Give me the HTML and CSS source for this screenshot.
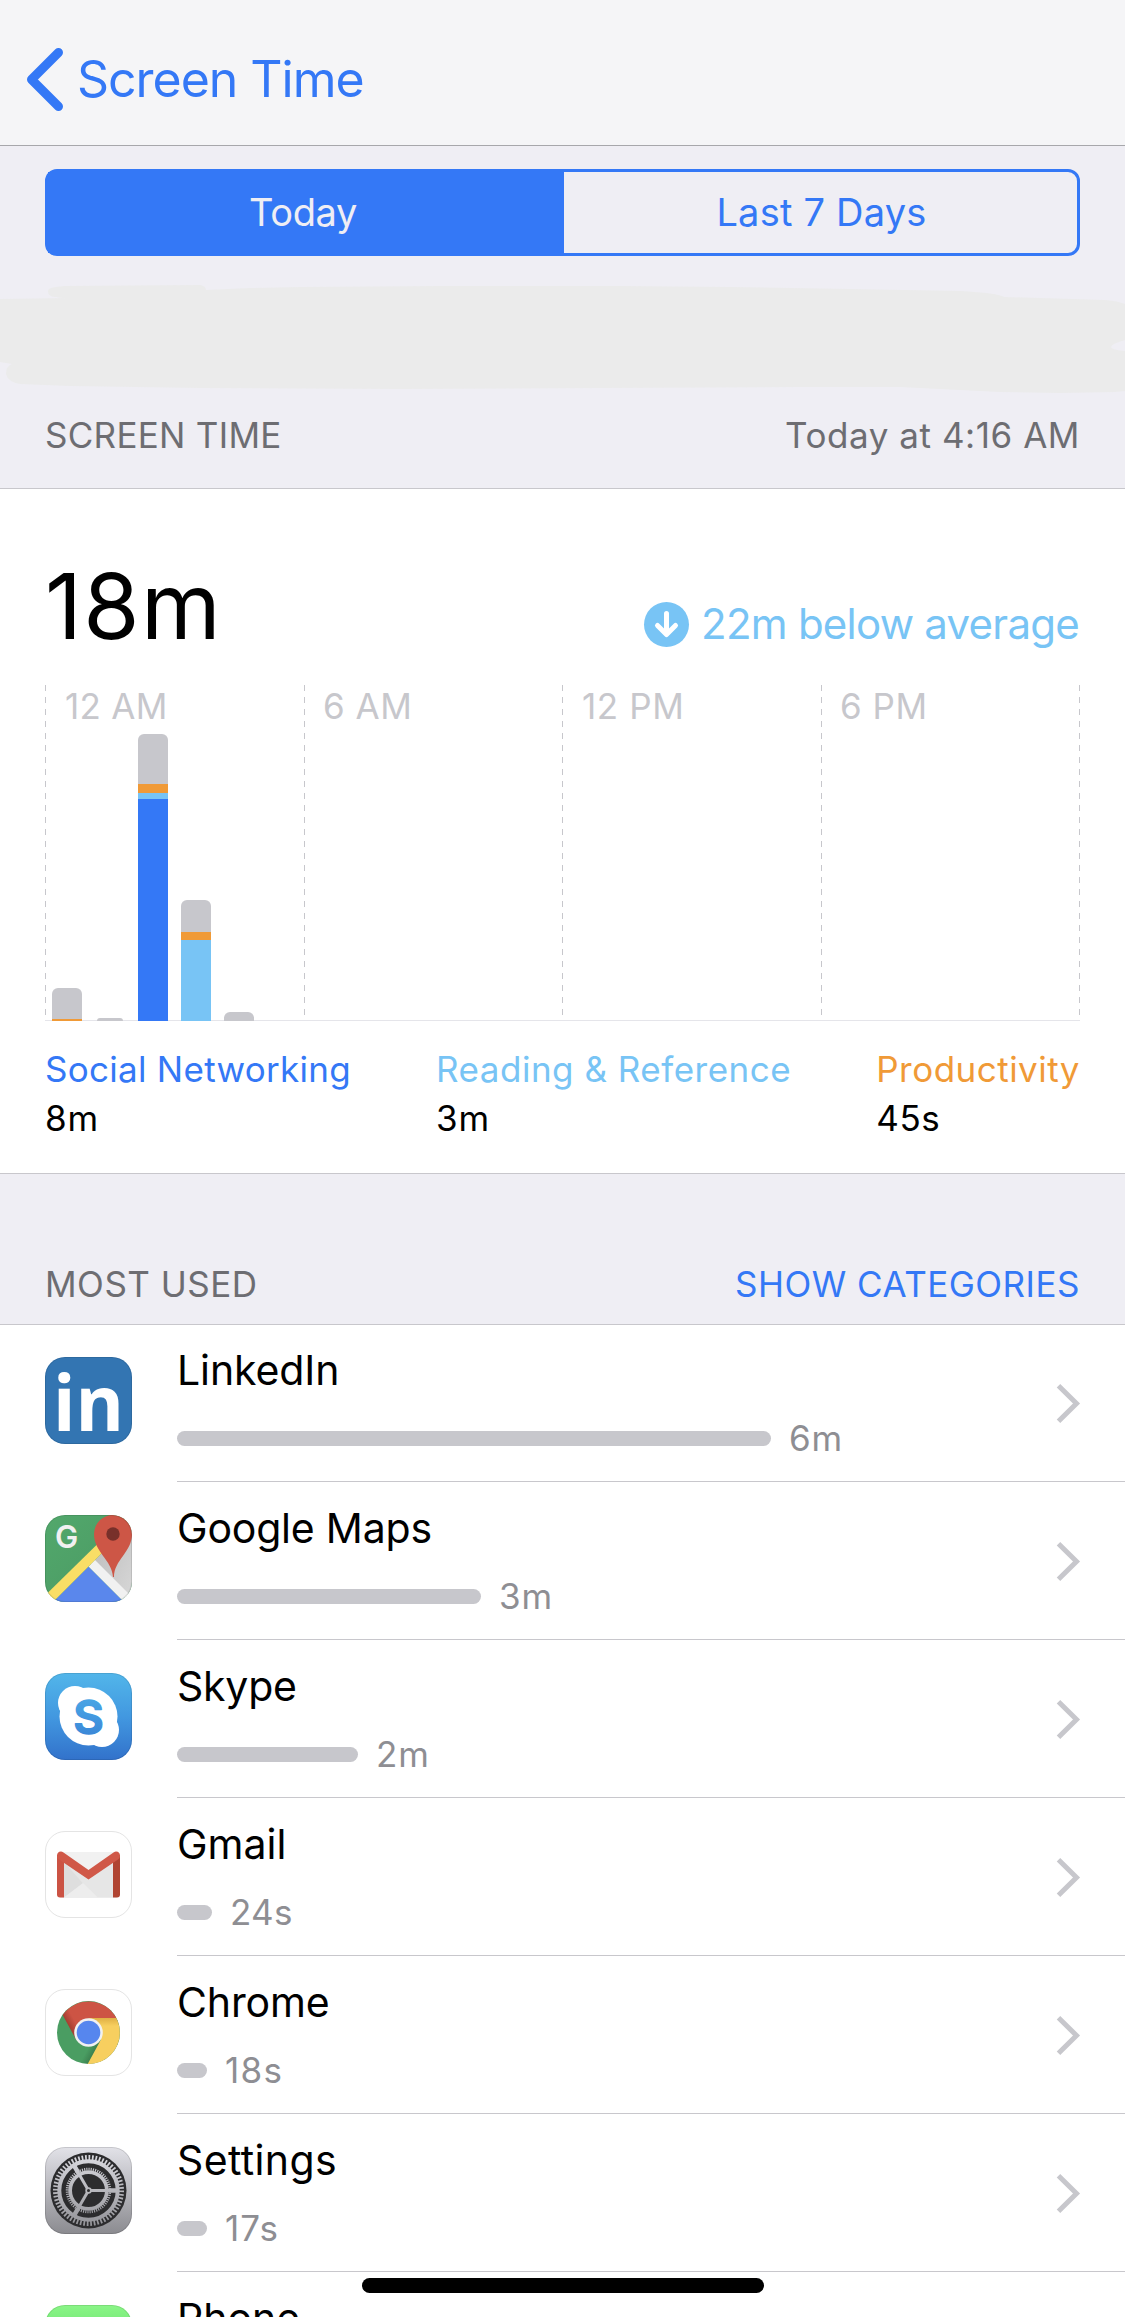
FILE: index.html
```
<!DOCTYPE html>
<html lang="en">
<head>
<meta charset="utf-8">
<title>Screen Time</title>
<link rel="stylesheet" href="styles.css">
</head>
<body>
<div class="screen">
  <header class="nav">
    <svg class="nav-back" width="40" height="66" viewBox="0 0 40 66"><path d="M34.5 6.5 7.5 33.500 34.500 60.500" fill="none" stroke="#3478f6" stroke-width="9" stroke-linecap="round" stroke-linejoin="round"/></svg>
    <span class="nav-title">Screen Time</span>
  </header>

  <section class="top">
    <div class="segments">
      <div class="segment segment-on">Today</div>
      <div class="segment segment-off">Last 7 Days</div>
    </div>
    <svg class="smudge" width="1125" height="158" viewBox="0 256 1125 158"><path fill="#ebebeb" d="M0 299 68 298 C52 298 48 296 48 291 C48 288 54 287 64 286 L200 285 Q206 286 206 290 L250 288 300 287 440 286 620 286 730 287 850 289 960 291 Q998 293 1004 297 L1105 300 Q1118 301 1125 304 V340 Q1111 344 1111 347 Q1112 350 1125 351 V391 L1115 392 1060 393 1000 392 900 387 800 387 600 388 400 389 200 388 70 386 20 384 Q8 382 6 374 Q6 366 12 364 L0 362Z"/></svg>
    <div class="heading">
      <span class="heading-a">SCREEN TIME</span>
      <span class="heading-b">Today at 4:16 AM</span>
    </div>
  </section>

  <section class="card">
    <div class="summary">
      <div class="total">18m</div>
      <div class="average">
        <svg class="average-icon" width="45" height="45" viewBox="0 0 45 45"><circle cx="22.500" cy="22.500" r="22.500" fill="#78c4f5"/><path d="M22.500 11.500V32M13.500 23.500l9 9 9-9" fill="none" stroke="#fff" stroke-width="5" stroke-linecap="round" stroke-linejoin="round"/></svg>
        <span class="average-text">22m below average</span>
      </div>
    </div>

    <div class="chart">
      <div class="hours">
        <div class="hour h12">12 AM</div>
        <div class="hour h6">6 AM</div>
        <div class="hour h12p">12 PM</div>
        <div class="hour h6">6 PM</div>
      </div>
      <div class="bars">
        <div class="bar"><i class="other" style="height:31px"></i><i class="prod" style="height:2px"></i></div>
        <div class="bar bar-tiny"><i class="other" style="height:3px"></i></div>
        <div class="bar"><i class="other" style="height:50px"></i><i class="prod" style="height:9px"></i><i class="read" style="height:6px"></i><i class="social" style="height:222px"></i></div>
        <div class="bar"><i class="other" style="height:32px"></i><i class="prod" style="height:8px"></i><i class="read" style="height:81px"></i></div>
        <div class="bar"><i class="other" style="height:9px"></i></div>
      </div>
    </div>

    <div class="legend">
      <div class="key"><span class="key-social">Social Networking</span><span class="key-min">8m</span></div>
      <div class="key"><span class="key-read">Reading &amp; Reference</span><span class="key-min">3m</span></div>
      <div class="key"><span class="key-prod">Productivity</span><span class="key-sec">45s</span></div>
    </div>
  </section>

  <div class="heading heading-list">
    <span class="heading-c">MOST USED</span>
    <span class="heading-link">SHOW CATEGORIES</span>
  </div>

  <section class="apps">
    <div class="app">
      <svg class="icon" width="87" height="87" viewBox="0 0 87 87"><rect width="87" height="87" rx="20" fill="#3375b2"/><rect x=".5" y=".5" width="86" height="86" rx="19.500" fill="none" stroke="#000" stroke-opacity=".1"/><text x="8" y="74" class="mark-in" textLength="71" lengthAdjust="spacingAndGlyphs">in</text></svg>
      <div class="app-body">
        <div class="app-info"><div class="app-name n-linkedin">LinkedIn</div><div class="usage"><div class="meter" style="width:594px"></div><span class="time t-min">6m</span></div></div>
        <svg class="chevron" width="26" height="39" viewBox="0 0 26 39"><path d="M3.500 1.800 21.500 19.500 3.500 37.200" fill="none" stroke="#c7c7cc" stroke-width="5"/></svg>
      </div>
    </div>

    <div class="app">
      <svg class="icon" width="87" height="87" viewBox="0 0 87 87">
        <defs>
          <clipPath id="tile"><rect width="87" height="87" rx="20"/></clipPath>
          <linearGradient id="land" x1="0" y1="0" x2="1" y2="1"><stop offset="0" stop-color="#52a86c"/><stop offset="1" stop-color="#4a9862"/></linearGradient>
          <linearGradient id="shade" x1="0" y1="0" x2="1" y2="1"><stop offset="0" stop-color="#b9b9b9"/><stop offset="1" stop-color="#d8d8d8"/></linearGradient>
        </defs>
        <g clip-path="url(#tile)">
          <rect width="87" height="87" fill="url(#land)"/>
          <path d="M87 8 46 49 87 87Z" fill="url(#shade)"/>
          <path d="M43.500 51.500 8 87H79Z" fill="#5a87ec"/>
          <path d="M43.500 51.500 50 45 90 85 84 92Z" fill="#f1f1f1"/>
          <path d="M-2 82.500 52 29.500 58 37 5 90Z" fill="#f9de66"/>
          <path d="M68 62C67 45 49 37 49 19A19 19 0 0 1 87 19C87 37 69 45 69 62Z" fill="#cd5646"/>
          <circle cx="68" cy="19" r="6.700" fill="#78302a"/>
        </g>
        <text x="21.500" y="33" class="mark-g" text-anchor="middle">G</text>
        <rect x=".5" y=".5" width="86" height="86" rx="19.500" fill="none" stroke="#000" stroke-opacity=".1"/>
      </svg>
      <div class="app-body">
        <div class="app-info"><div class="app-name n-maps">Google Maps</div><div class="usage"><div class="meter" style="width:304px"></div><span class="time t-min">3m</span></div></div>
        <svg class="chevron" width="26" height="39" viewBox="0 0 26 39"><path d="M3.500 1.800 21.500 19.500 3.500 37.200" fill="none" stroke="#c7c7cc" stroke-width="5"/></svg>
      </div>
    </div>

    <div class="app">
      <svg class="icon" width="87" height="87" viewBox="0 0 87 87">
        <defs><linearGradient id="sky" gradientUnits="userSpaceOnUse" x1="0" y1="0" x2="0" y2="87"><stop offset="0" stop-color="#52b6ea"/><stop offset=".5" stop-color="#4298e0"/><stop offset="1" stop-color="#3272cb"/></linearGradient></defs>
        <rect width="87" height="87" rx="20" fill="url(#sky)"/>
        <g fill="#fff"><circle cx="43.500" cy="43.500" r="29"/><circle cx="30" cy="30" r="17"/><circle cx="57" cy="57" r="17"/></g>
        <text x="43.500" y="60.500" class="mark-s" text-anchor="middle" fill="url(#sky)" stroke="url(#sky)">S</text>
        <rect x=".5" y=".5" width="86" height="86" rx="19.500" fill="none" stroke="#000" stroke-opacity=".1"/>
      </svg>
      <div class="app-body">
        <div class="app-info"><div class="app-name n-skype">Skype</div><div class="usage"><div class="meter" style="width:181px"></div><span class="time t-min">2m</span></div></div>
        <svg class="chevron" width="26" height="39" viewBox="0 0 26 39"><path d="M3.500 1.800 21.500 19.500 3.500 37.200" fill="none" stroke="#c7c7cc" stroke-width="5"/></svg>
      </div>
    </div>

    <div class="app">
      <svg class="icon" width="87" height="87" viewBox="0 0 87 87">
        <rect x=".5" y=".5" width="86" height="86" rx="19.500" fill="#fff" stroke="#e4e4e4"/>
        <rect x="14" y="21" width="59" height="45.500" rx="2" fill="#e6e6e6"/>
        <path d="M15 21H72L43.500 42Z" fill="#f1f1f1"/>
        <path d="M19 31 50 66H19Z" fill="#dedede"/>
        <path d="M19 66.500 43.500 48 68 31V66.500Z" fill="#e6e6e6"/>
        <path d="M19 66.500 38 52 53 66.500Z" fill="#ededed"/>
        <path d="M12 24H19V66.500H15Q12 66.500 12 63.500Z" fill="#cb5344"/>
        <path d="M68 24H75V63.500Q75 66.500 72 66.500H68Z" fill="#b04432"/>
        <path d="M12 25Q12 20.500 16 20.500 17 20.500 18.500 21.600L43.500 39 68.500 21.600Q70 20.500 71 20.500 75 20.500 75 25 75 27 73 28.500L43.500 48.500 14 28.500Q12 27 12 25Z" fill="#d05848"/>
      </svg>
      <div class="app-body">
        <div class="app-info"><div class="app-name n-gmail">Gmail</div><div class="usage"><div class="meter" style="width:35px"></div><span class="time t-24">24s</span></div></div>
        <svg class="chevron" width="26" height="39" viewBox="0 0 26 39"><path d="M3.500 1.800 21.500 19.500 3.500 37.200" fill="none" stroke="#c7c7cc" stroke-width="5"/></svg>
      </div>
    </div>

    <div class="app">
      <svg class="icon" width="87" height="87" viewBox="0 0 87 87">
        <defs>
          <linearGradient id="rshade" gradientUnits="userSpaceOnUse" x1="24" y1="38" x2="31" y2="34"><stop offset="0" stop-color="#a33d30"/><stop offset="1" stop-color="#cd5444"/></linearGradient>
          <linearGradient id="yshade" gradientUnits="userSpaceOnUse" x1="0" y1="29" x2="0" y2="37"><stop offset="0" stop-color="#dfb044"/><stop offset="1" stop-color="#f7cf5f"/></linearGradient>
          <linearGradient id="gshade" gradientUnits="userSpaceOnUse" x1="51" y1="64" x2="43" y2="59.500"><stop offset="0" stop-color="#387a4b"/><stop offset="1" stop-color="#4a9d62"/></linearGradient>
        </defs>
        <rect x=".5" y=".5" width="86" height="86" rx="19.500" fill="#fff" stroke="#e4e4e4"/>
        <circle cx="43.500" cy="43.500" r="31.500" fill="url(#gshade)"/>
        <path d="M71.300 29A31.500 31.500 0 0 0 17.700 26L31 50.500 43.500 43.500V29Z" fill="url(#rshade)"/>
        <path d="M43.500 29H71.300A31.500 31.500 0 0 1 42.700 75L56 50.500Z" fill="url(#yshade)"/>
        <circle cx="43.500" cy="43.500" r="14.300" fill="#f1f1f1"/><circle cx="43.500" cy="43.500" r="11.800" fill="#5686ee"/>
      </svg>
      <div class="app-body">
        <div class="app-info"><div class="app-name n-chrome">Chrome</div><div class="usage"><div class="meter" style="width:30px"></div><span class="time t-18">18s</span></div></div>
        <svg class="chevron" width="26" height="39" viewBox="0 0 26 39"><path d="M3.500 1.800 21.500 19.500 3.500 37.200" fill="none" stroke="#c7c7cc" stroke-width="5"/></svg>
      </div>
    </div>

    <div class="app">
      <svg class="icon" width="87" height="87" viewBox="0 0 87 87">
        <defs><linearGradient id="steel" gradientUnits="userSpaceOnUse" x1="0" y1="0" x2="0" y2="87"><stop offset="0" stop-color="#e2e2e8"/><stop offset="1" stop-color="#8b8b90"/></linearGradient></defs>
        <rect width="87" height="87" rx="20" fill="url(#steel)"/>
        <rect x=".5" y=".5" width="86" height="86" rx="19.500" fill="none" stroke="#000" stroke-opacity=".12"/>
        <circle cx="43.500" cy="43.500" r="38" fill="#2c2c2e"/>
        <g fill="none" stroke="url(#steel)">
          <circle cx="43.500" cy="43.500" r="33" stroke-width="5" pathLength="120" stroke-dasharray="1 1"/>
          <circle cx="43.500" cy="43.500" r="29.200" stroke-width="4"/>
          <circle cx="43.500" cy="43.500" r="21" stroke-width="3.500" pathLength="120" stroke-dasharray="1 1"/>
          <circle cx="43.500" cy="43.500" r="18.300" stroke-width="3.600"/>
          <path d="M43.500 43.499 71 43.501M43.500 43.500 29.750 19.700M43.500 43.500 29.750 67.300" stroke-width="3"/>
          <path d="M64 43.499 73 43.501M33.200 25.700 29.200 18.800M33.200 61.300 29.200 68.200" stroke-width="4.500"/>
        </g>
        <circle cx="43.500" cy="43.500" r="3.200" fill="#b8b8bd"/><circle cx="43.500" cy="43.500" r="1.500" fill="#2c2c2e"/>
      </svg>
      <div class="app-body">
        <div class="app-info"><div class="app-name n-settings">Settings</div><div class="usage"><div class="meter" style="width:30px"></div><span class="time t-17">17s</span></div></div>
        <svg class="chevron" width="26" height="39" viewBox="0 0 26 39"><path d="M3.500 1.800 21.500 19.500 3.500 37.200" fill="none" stroke="#c7c7cc" stroke-width="5"/></svg>
      </div>
    </div>

    <div class="app">
      <svg class="icon" width="87" height="87" viewBox="0 0 87 87">
        <defs><linearGradient id="leaf" x1="0" y1="0" x2="0" y2="1"><stop offset="0" stop-color="#8af587"/><stop offset="1" stop-color="#3fc64a"/></linearGradient></defs>
        <rect width="87" height="87" rx="20" fill="url(#leaf)"/><rect x=".5" y=".5" width="86" height="86" rx="19.500" fill="none" stroke="#000" stroke-opacity=".1"/>
      </svg>
      <div class="app-body">
        <div class="app-info"><div class="app-name">Phone</div></div>
      </div>
    </div>
  </section>
  <div class="home-bar"></div>
</div>
</body>
</html>
```
FILE: styles.css
```
* { box-sizing: border-box; }
body { margin: 0; background: #fff; }
.screen {
  position: relative;
  width: 1125px;
  height: 2317px;
  overflow: hidden;
  font-family: Inter, "Liberation Sans", sans-serif;
  font-size: 35px;
  line-height: 42px;
  color: #000;
  white-space: nowrap;
}
svg { display: block; flex: none; overflow: visible; }

.nav {
  display: flex;
  align-items: flex-start;
  height: 146px;
  padding: 46px 0 0 24px;
  background: #f5f5f7;
  border-bottom: 1px solid #a7a7ab;
  color: #3478f6;
}
.nav-title { margin: 3px 0 0 13px; font-size: 50px; line-height: 60px; letter-spacing: -1.03px; }

.top { background: #efeef4; padding: 23px 0 32px; border-bottom: 1px solid #c8c7cc; }
.segments {
  display: flex;
  height: 87px;
  margin: 0 45px;
  border: 3px solid #3478f6;
  border-radius: 12px;
  color: #3478f6;
  font-size: 38px;
  line-height: 46px;
  text-align: center;
}
.segment { padding-top: 17px; }
.segment-on { width: 516px; padding-right: 6px; background: #3478f6; color: #efeef4; letter-spacing: -.4px; }
.segment-off { flex: 1; padding-left: 2px; letter-spacing: .22px; }

.heading { display: flex; justify-content: space-between; padding: 0 45px; color: #6d6d72; }
.heading-a { letter-spacing: .29px; }
.heading-b { letter-spacing: .55px; }
.heading-c { letter-spacing: .5px; }
.heading-link { letter-spacing: .49px; color: #3478f6; }
.heading-list { height: 150px; padding-top: 89px; background: #efeef4; }

.card { padding: 62px 45px 34px; background: #fff; border-bottom: 1px solid #c8c7cc; }
.summary { display: flex; justify-content: space-between; align-items: flex-end; height: 110px; }
.total { font-size: 91px; line-height: 110px; letter-spacing: 1.34px; }
.average { display: flex; align-items: center; gap: 12px; padding: 0 1px 12px 0; color: #78c4f5; }
.average-icon { margin-top: 2px; }
.average-text { font-size: 42px; line-height: 51px; letter-spacing: -.75px; }

.chart { display: grid; width: 1035px; height: 336px; margin-top: 24px; }
.hours, .bars { grid-area: 1 / 1; }
.hours {
  display: grid;
  grid-template-columns: 259px 258px 259px 258px;
  background: linear-gradient(#e5e5ea, #e5e5ea) bottom / 100% 1px no-repeat,
    repeating-linear-gradient(#c7c7cc 0 6px, transparent 6px 12px) right top / 1px 331px no-repeat;
  color: #c7c7cc;
}
.hour {
  height: 331px;
  padding-left: 20px;
  background: repeating-linear-gradient(#c7c7cc 0 6px, transparent 6px 12px) left top / 1px 331px no-repeat;
}
.h12 { letter-spacing: .3px; }
.h6 { padding-left: 19px; letter-spacing: .5px; }
.h12p { letter-spacing: .6px; }
.bars { display: flex; align-items: flex-end; gap: 13px; padding-left: 7px; }
.bar { display: flex; flex-direction: column; width: 30px; border-radius: 6px 6px 0 0; overflow: hidden; }
.bar-tiny { width: 26px; margin: 0 2px; }
.other { background: #c7c7cc; }
.prod { background: #f09a37; }
.read { background: #78c4f5; }
.social { background: #3478f6; }

.legend { display: flex; justify-content: space-between; margin-top: 27px; }
.key { display: flex; flex-direction: column; gap: 7px; }
.key-social { color: #3478f6; letter-spacing: .28px; }
.key-read { color: #78c4f5; letter-spacing: .5px; }
.key-prod { color: #f09a37; letter-spacing: .48px; }
.key-min { letter-spacing: .8px; }
.key-sec { letter-spacing: .56px; }

.apps { border-top: 1px solid #c8c7cc; }
.app { display: flex; align-items: flex-start; height: 158px; padding-left: 45px; }
.app:first-child { margin-top: -1px; }
.icon { margin-top: 33px; }
.app-body {
  display: flex;
  flex: 1;
  justify-content: space-between;
  align-items: flex-start;
  height: 158px;
  margin-left: 45px;
  padding: 21px 44px 0 0;
  border-bottom: 1px solid #c8c7cc;
}
.app-name { font-size: 41px; line-height: 50px; }
.n-linkedin { letter-spacing: -.1px; }
.n-maps { letter-spacing: -.2px; }
.n-skype { letter-spacing: -.24px; }
.n-gmail { letter-spacing: 0; }
.n-chrome { letter-spacing: -.15px; }
.n-settings { letter-spacing: .38px; }
.usage { display: flex; align-items: center; gap: 18px; margin-top: 22px; }
.meter { height: 15px; margin-top: 1px; border-radius: 7.5px; background: #c7c7cc; }
.time { color: #8e8e93; }
.t-min { letter-spacing: .8px; }
.t-24 { letter-spacing: .3px; }
.t-18 { letter-spacing: 1.36px; }
.t-17 { letter-spacing: .92px; }
.chevron { margin-top: 39px; }

.mark-in { font: 700 77px "Open Sans", sans-serif; fill: #fff; }
.mark-g { font: 600 31px Inter, sans-serif; fill: #f1f1f1; }
.mark-s { font: 600 47px Inter, sans-serif; stroke-width: 1.5px; stroke-linejoin: round; }

.home-bar {
  position: absolute;
  left: 362px;
  top: 2278px;
  width: 402px;
  height: 15px;
  border-radius: 7.5px;
  background: #000;
}
```
